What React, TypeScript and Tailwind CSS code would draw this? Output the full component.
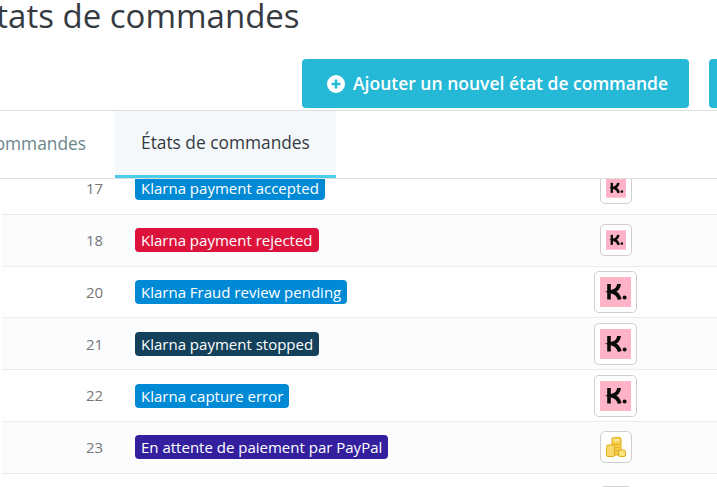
type Row = {
  id: number
  name: string
  color: string
  icon: "small" | "large" | "coins"
}

const rows: Row[] = [
  { id: 17, name: "Klarna payment accepted", color: "bg-[#008ad6]", icon: "small" },
  { id: 18, name: "Klarna payment rejected", color: "bg-[#dc143c]", icon: "small" },
  { id: 20, name: "Klarna Fraud review pending", color: "bg-[#008ad6]", icon: "large" },
  { id: 21, name: "Klarna payment stopped", color: "bg-[#13405a]", icon: "large" },
  { id: 22, name: "Klarna capture error", color: "bg-[#008ad6]", icon: "large" },
  { id: 23, name: "En attente de paiement par PayPal", color: "bg-[#34209e]", icon: "coins" },
]

function KlarnaLogo({ className }: { className: string }) {
  return (
    <svg viewBox="0 0 31 30" className={className}>
      <rect width="31" height="30" fill="#ffb3c7" />
      <path d="M9 7v15.5" fill="none" stroke="#0a0a0a" strokeWidth="3.6" />
      <path d="M19 7c-.2 3.7-2.8 6.4-7 7.6 3.6 1 6.6 3.7 7.8 7.9" fill="none" stroke="#0a0a0a" strokeWidth="3.8" />
      <circle cx="24.6" cy="20.6" r="2" fill="#0a0a0a" />
    </svg>
  )
}

function PlusCircle() {
  return (
    <svg viewBox="0 0 18 18" className="w-[18px] h-[18px] shrink-0">
      <circle cx="9" cy="9" r="9" fill="#fff" />
      <path d="M9 4.5v9M4.5 9h9" stroke="#25b9d7" strokeWidth="2.6" />
    </svg>
  )
}

function Coins() {
  return (
    <svg viewBox="0 0 20 20" className="w-5 h-5">
      <rect x="6" y="0.5" width="9" height="17.5" rx="1.5" fill="#f6cd45" stroke="#e0ab1c" />
      <rect x="7.5" y="2" width="6" height="2.5" fill="#fdec9e" />
      <path d="M7.5 7.5h6M7.5 10.5h6M7.5 13.5h6" stroke="#e6b62c" />
      <rect x="0.5" y="8" width="8" height="11.5" rx="1.5" fill="#f8da6a" stroke="#e0ab1c" />
      <rect x="12.5" y="13" width="7" height="6.5" rx="1.5" fill="#fbe37c" stroke="#e0ab1c" />
    </svg>
  )
}

function Thumb({ icon }: { icon: Row["icon"] }) {
  if (icon === "large") {
    return (
      <div className="w-[43px] h-[42px] -ml-[1px] bg-white border border-[#cfcfcf] rounded-[5px] flex items-center justify-center">
        <KlarnaLogo className="w-[31px] h-[30px]" />
      </div>
    )
  }
  return (
    <div className="w-[32px] h-[32px] bg-white border border-[#cfcfcf] rounded-[5px] flex items-center justify-center">
      {icon === "small" ? <KlarnaLogo className="w-5 h-5" /> : <Coins />}
    </div>
  )
}

export default function App() {
  return (
    <div className="w-[717px] h-[487px] overflow-hidden bg-white font-['Open_Sans',sans-serif] text-[#363a41]">
      <h1 className="h-[59px] -ml-[22px] -mt-[7px] mb-[7px] text-[33px] leading-[45px] whitespace-nowrap">
        États de commandes
      </h1>

      <div className="flex gap-5 pl-[302px] w-[800px] h-[51px]">
        <button className="w-[387px] h-[49px] flex items-center pl-[25px] gap-[8px] bg-[#25b9d7] text-white text-[17.5px] font-semibold rounded-[4px] whitespace-nowrap">
          <PlusCircle />
          Ajouter un nouvel état de commande
        </button>
        <div className="w-[60px] h-[49px] bg-[#25b9d7] rounded-[4px]" />
      </div>

      <div className="flex h-[69px] border-y border-[#dfdfdf] text-[17.33px]">
        <div className="w-[115px] flex items-center justify-end pr-[29px] pb-[2px] text-[#6c868e] overflow-hidden whitespace-nowrap">
          ommandes
        </div>
        <div className="w-[221px] flex items-center pl-[26px] bg-[#f4f8fb] border-b-[3px] border-[#4bcdea] whitespace-nowrap">
          États de commandes
        </div>
      </div>

      <div className="h-[308px] overflow-hidden">
        <div className="-mt-[16px] pl-[2px]">
          {rows.map((row, i) => (
            <div
              key={row.id}
              className={`flex items-center h-[51.8px] border-b border-[#e8ebef] ${i % 2 ? "bg-[#fbfcfe]" : "bg-white"}`}
            >
              <div className="w-[84px] ml-[84px] text-[15px] text-[#777777]">{row.id}</div>
              <div className="-ml-[35px] flex-1">
                <span className={`inline-block h-6 leading-6 px-[6px] rounded-[4px] text-[15px] text-white whitespace-nowrap ${row.color}`}>
                  {row.name}
                </span>
              </div>
              <div className="w-[160px] flex justify-center mr-[21px]">
                <Thumb icon={row.icon} />
              </div>
            </div>
          ))}
          <div className="flex justify-end h-6 pr-[85px] pt-[12px]">
            <div className="w-[32px] h-[32px] bg-white border border-[#cfcfcf] rounded-[5px]" />
          </div>
        </div>
      </div>
    </div>
  )
}
